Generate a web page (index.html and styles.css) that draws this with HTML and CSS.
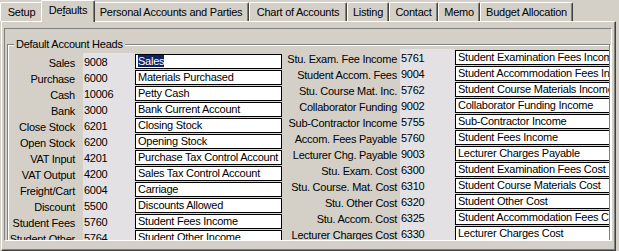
FILE: index.html
```html
<!DOCTYPE html>
<html>
<head>
<meta charset="utf-8">
<link rel="stylesheet" href="styles.css">
</head>
<body>
<div class="win">
  <div class="tabs">
    <div class="tab">Setup</div>
    <div class="tab sel">De<u>f</u>aults</div>
    <div class="tab">Personal Accounts and Parties</div>
    <div class="tab">Chart of Accounts</div>
    <div class="tab">Listing</div>
    <div class="tab">Contact</div>
    <div class="tab">Memo</div>
    <div class="tab">Budget Allocation</div>
  </div>
  <div class="page">
    <div class="inner">
      <div class="group">
        <span class="legend">Default Account Heads</span>
        <div class="cols">
          <div class="grid left">
            <span class="lbl">Sales</span><span class="code">9008</span><span class="box"><span class="hl">Sales</span></span>
            <span class="lbl">Purchase</span><span class="code">6000</span><span class="box">Materials Purchased</span>
            <span class="lbl">Cash</span><span class="code">10006</span><span class="box">Petty Cash</span>
            <span class="lbl">Bank</span><span class="code">3000</span><span class="box">Bank Current Account</span>
            <span class="lbl">Close Stock</span><span class="code">6201</span><span class="box">Closing Stock</span>
            <span class="lbl">Open Stock</span><span class="code">6200</span><span class="box">Opening Stock</span>
            <span class="lbl">VAT Input</span><span class="code">4201</span><span class="box">Purchase Tax Control Account</span>
            <span class="lbl">VAT Output</span><span class="code">4200</span><span class="box">Sales Tax Control Account</span>
            <span class="lbl">Freight/Cart</span><span class="code">6004</span><span class="box">Carriage</span>
            <span class="lbl">Discount</span><span class="code">5500</span><span class="box">Discounts Allowed</span>
            <span class="lbl">Student Fees</span><span class="code">5760</span><span class="box">Student Fees Income</span>
            <span class="lbl">Student Other</span><span class="code">5764</span><span class="box">Student Other Income</span>
          </div>
          <div class="grid right">
            <span class="lbl">Stu. Exam. Fee Income</span><span class="code">5761</span><span class="box">Student Examination Fees Income</span>
            <span class="lbl">Student Accom. Fees</span><span class="code">9004</span><span class="box">Student Accommodation Fees Income</span>
            <span class="lbl">Stu. Course Mat. Inc.</span><span class="code">5762</span><span class="box">Student Course Materials Income</span>
            <span class="lbl">Collaborator Funding</span><span class="code">9002</span><span class="box">Collaborator Funding Income</span>
            <span class="lbl">Sub-Contractor Income</span><span class="code">5755</span><span class="box">Sub-Contractor Income</span>
            <span class="lbl">Accom. Fees Payable</span><span class="code">5760</span><span class="box">Student Fees Income</span>
            <span class="lbl">Lecturer Chg. Payable</span><span class="code">9003</span><span class="box">Lecturer Charges Payable</span>
            <span class="lbl">Stu. Exam. Cost</span><span class="code">6300</span><span class="box">Student Examination Fees Cost</span>
            <span class="lbl">Stu. Course. Mat. Cost</span><span class="code">6310</span><span class="box">Student Course Materials Cost</span>
            <span class="lbl">Stu. Other Cost</span><span class="code">6320</span><span class="box">Student Other Cost</span>
            <span class="lbl">Stu. Accom. Cost</span><span class="code">6325</span><span class="box">Student Accommodation Fees Cost</span>
            <span class="lbl">Lecturer Charges Cost</span><span class="code">6330</span><span class="box">Lecturer Charges Cost</span>
          </div>
        </div>
      </div>
    </div>
  </div>
</div>
</body>
</html>
```
FILE: styles.css
```css
html, body {
  margin: 0;
  padding: 0;
}
body {
  width: 619px;
  height: 251px;
  overflow: hidden;
  background: #d4d0c8;
  color: #000;
  font-family: "Liberation Sans", Arial, sans-serif;
  font-size: 11px;
  letter-spacing: -0.25px;
}
.tabs {
  display: flex;
  height: 21px;
  position: relative;
  z-index: 2;
}
.tab {
  box-sizing: border-box;
  height: 19px;
  margin-top: 2px;
  border-left: 1px solid #fff;
  border-top: 1px solid #fff;
  border-right: 1px solid #404040;
  border-radius: 2px 2px 0 0;
  box-shadow: inset -1px 0 #808080;
  background: #d4d0c8;
  text-align: center;
  line-height: 13px;
  padding-top: 3px;
  white-space: nowrap;
}
.tab:nth-child(1) { width: 43px; }
.tab:nth-child(2) { width: 54px; }
.tab:nth-child(3) { width: 156px; }
.tab:nth-child(4) { width: 98px; }
.tab:nth-child(5) { width: 42px; }
.tab:nth-child(6) { width: 49px; }
.tab:nth-child(7) { width: 42px; }
.tab:nth-child(8) { width: 93px; }
.tab.sel {
  height: 22px;
  margin-top: 0;
  margin-left: -2px;
  margin-right: -2px;
  padding-top: 3px;
  position: relative;
  z-index: 3;
}
.page {
  box-sizing: border-box;
  width: 615px;
  height: 230px;
  margin-left: 1px;
  border-top: 1px solid #fff;
  border-left: 1px solid #fff;
  border-right: 1px solid #404040;
  border-bottom: 1px solid #404040;
  box-shadow: inset -1px -1px #808080;
  padding: 6px 0 0 2px;
}
.inner {
  box-sizing: border-box;
  width: 608px;
  height: 213px;
  border: 1px solid;
  border-color: #808080 #fff #fff #808080;
  overflow: hidden;
  padding: 15px 0 0 2px;
}
.group {
  position: relative;
  box-sizing: border-box;
  width: 603px;
  height: 260px;
  border: 1px solid #808080;
  box-shadow: 1px 1px 0 #fff, inset 1px 1px 0 #fff;
  padding: 4px 0 0 1px;
}
.legend {
  position: absolute;
  left: 6px;
  top: -8px;
  padding: 0 2px;
  background: #d4d0c8;
  line-height: 14px;
}
.cols {
  display: flex;
  align-items: flex-start;
  overflow: hidden;
  height: 240px;
}
.grid {
  display: grid;
  grid-auto-rows: 16px;
}
.left {
  grid-template-columns: 74px 52px 147px;
  margin-top: 4px;
}
.right {
  grid-template-columns: 118px 55px 200px;
}
.lbl {
  display: flex;
  justify-content: flex-end;
  white-space: nowrap;
  line-height: 14px;
  padding-top: 3px;
}
.left .lbl { padding-right: 8px; }
.right .lbl { padding-right: 3px; }
.code {
  background: #e3e1e3;
  line-height: 14px;
  padding: 2px 0 0 1px;
}
.box {
  box-sizing: border-box;
  height: 15px;
  margin-top: 1px;
  border: 1px solid #000;
  background: #fff;
  white-space: nowrap;
  overflow: hidden;
  line-height: 13px;
  padding-left: 2px;
}
.hl {
  background: #0a246a;
  color: #fff;
}
```
